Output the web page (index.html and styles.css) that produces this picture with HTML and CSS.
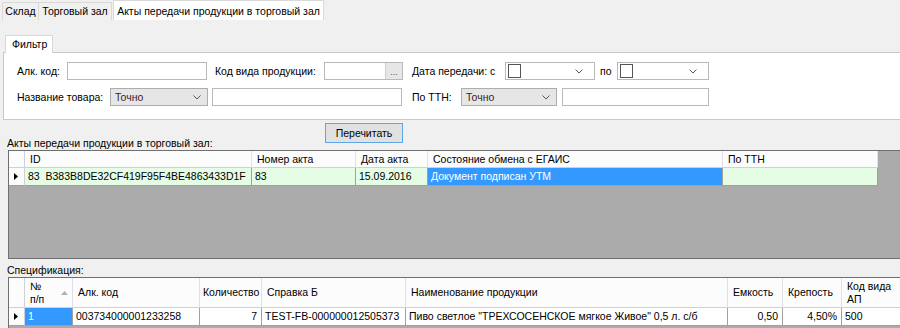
FILE: index.html
```html
<!DOCTYPE html>
<html lang="ru">
<head>
  <meta charset="UTF-8">
  <title>Акты передачи продукции в торговый зал</title>
  <link rel="stylesheet" href="styles.css">
</head>
<body>

  <div class="tabs">
    <div class="tab t1">Склад</div>
    <div class="tab t2">Торговый зал</div>
    <div class="tab t3 active">Акты передачи продукции в торговый зал</div>
  </div>

  <div class="page">
    <div class="group-tab">Фильтр</div>
    <div class="filter">
      <div class="row">
        <span class="lbl w-alk">Алк. код:</span>
        <span class="edit w-alk-edit"></span>
        <span class="lbl w-kod">Код вида продукции:</span>
        <span class="edit w-kod-edit"><span class="dots">...</span></span>
        <span class="lbl w-date">Дата передачи: с</span>
        <span class="edit date w-date1">
          <span class="check"></span>
          <svg class="chev" width="8" height="5" viewBox="0 0 8 5"><polyline points="0.5,0.5 4,4 7.5,0.5" fill="none" stroke="#555" stroke-width="1"/></svg>
        </span>
        <span class="lbl w-po">по</span>
        <span class="edit date w-date2">
          <span class="check"></span>
          <svg class="chev" width="8" height="5" viewBox="0 0 8 5"><polyline points="0.5,0.5 4,4 7.5,0.5" fill="none" stroke="#555" stroke-width="1"/></svg>
        </span>
      </div>
      <div class="row">
        <span class="lbl w-name">Название товара:</span>
        <span class="combo w-combo1">Точно
          <svg class="chev" width="8" height="5" viewBox="0 0 8 5"><polyline points="0.5,0.5 4,4 7.5,0.5" fill="none" stroke="#555" stroke-width="1"/></svg>
        </span>
        <span class="edit w-name-edit"></span>
        <span class="lbl w-ttn">По ТТН:</span>
        <span class="combo w-combo2">Точно
          <svg class="chev" width="8" height="5" viewBox="0 0 8 5"><polyline points="0.5,0.5 4,4 7.5,0.5" fill="none" stroke="#555" stroke-width="1"/></svg>
        </span>
        <span class="edit w-ttn-edit"></span>
      </div>
    </div>

    <div class="toolbar">
      <span class="caption">Акты передачи продукции в торговый зал:</span>
      <button class="btn">Перечитать</button>
    </div>

    <div class="grid grid-acts">
      <div class="grow head">
        <span class="cell rh"></span>
        <span class="cell c-id">ID</span>
        <span class="cell c-num">Номер акта</span>
        <span class="cell c-date">Дата акта</span>
        <span class="cell c-state">Состояние обмена с ЕГАИС</span>
        <span class="cell c-ttn">По ТТН</span>
      </div>
      <div class="grow data green">
        <span class="cell rh"><svg width="4" height="7" viewBox="0 0 4 7"><polygon points="0,0 4,3.5 0,7" fill="#000"/></svg></span>
        <span class="cell c-id">83&nbsp; B383B8DE32CF419F95F4BE4863433D1F</span>
        <span class="cell c-num">83</span>
        <span class="cell c-date">15.09.2016</span>
        <span class="cell c-state selected">Документ подписан УТМ</span>
        <span class="cell c-ttn"></span>
      </div>
    </div>

    <div class="caption spec">Спецификация:</div>

    <div class="grid grid-spec">
      <div class="grow head tall">
        <span class="cell rh"></span>
        <span class="cell s-no two">№<br>п/п<svg class="sort" width="7" height="4" viewBox="0 0 7 4"><polygon points="0,4 3.5,0 7,4" fill="#b0b0b0"/></svg></span>
        <span class="cell s-alk">Алк. код</span>
        <span class="cell s-qty">Количество</span>
        <span class="cell s-ref">Справка Б</span>
        <span class="cell s-name">Наименование продукции</span>
        <span class="cell s-vol">Емкость</span>
        <span class="cell s-alc">Крепость</span>
        <span class="cell s-code two">Код вида<br>АП</span>
      </div>
      <div class="grow data">
        <span class="cell rh"><svg width="4" height="7" viewBox="0 0 4 7"><polygon points="0,0 4,3.5 0,7" fill="#000"/></svg></span>
        <span class="cell s-no selected">1</span>
        <span class="cell s-alk">003734000001233258</span>
        <span class="cell s-qty num">7</span>
        <span class="cell s-ref">TEST-FB-000000012505373</span>
        <span class="cell s-name">Пиво светлое "ТРЕХСОСЕНСКОЕ мягкое Живое" 0,5 л. с/б</span>
        <span class="cell s-vol num">0,50</span>
        <span class="cell s-alc num">4,50%</span>
        <span class="cell s-code">500</span>
      </div>
    </div>
  </div>

</body>
</html>
```

FILE: styles.css
```css
body {
  margin: 0;
  width: 900px;
  height: 328px;
  overflow: hidden;
  background-color: #f0f0f0;
  font-family: "Liberation Sans", Arial, sans-serif;
  font-size: 10.5px;
  color: #000;
}

/* верхние вкладки */
.tabs {
  display: flex;
  align-items: flex-end;
  height: 20px;
  padding-left: 2px;
}
.tab {
  box-sizing: border-box;
  height: 18px;
  line-height: 16px;
  text-align: center;
  border: 1px solid #d9d9d9;
  border-bottom: none;
  background-color: #f0f0f0;
  white-space: nowrap;
}
.t1 { width: 37px; }
.t2 { width: 73px; border-left: none; }
.t3 { width: 211px; margin-left: 1px; }
.tab.active {
  height: 20px;
  line-height: 20px;
  background-color: #fff;
}

.page {
  padding: 15px 0 0 3px;
}

/* фильтр */
.group-tab {
  position: relative;
  box-sizing: border-box;
  width: 48px;
  height: 18px;
  margin-left: 2px;
  margin-bottom: -1px;
  padding-left: 6px;
  line-height: 17px;
  background-color: #fff;
  border: 1px solid #d9d9d9;
  border-bottom: none;
}
.filter {
  box-sizing: border-box;
  width: 910px;
  height: 68px;
  background-color: #fff;
  border: 1px solid #c9c9c9;
  padding: 9px 0 0 13px;
}
.row {
  display: flex;
  height: 18px;
}
.row + .row {
  margin-top: 8px;
}
.lbl {
  line-height: 18px;
  white-space: nowrap;
}
.edit, .combo {
  position: relative;
  box-sizing: border-box;
  height: 18px;
  border: 1px solid #b9b9b9;
  background-color: #fff;
}
.combo {
  background-color: #e6e6e6;
  border-color: #adadad;
  padding-left: 4px;
  line-height: 16px;
  color: #3c1e28;
}
.chev {
  position: absolute;
  right: 6px;
  top: 6px;
}
.date .chev {
  right: 11px;
}
.check {
  position: absolute;
  left: 2px;
  top: 1px;
  box-sizing: border-box;
  width: 13px;
  height: 14px;
  border: 1px solid #555;
  background-color: #fff;
}
.dots {
  position: absolute;
  right: 0;
  top: 0;
  bottom: 0;
  width: 16px;
  background-color: #e6e6e6;
  border-left: 1px solid #d0d0d0;
  text-align: center;
  line-height: 18px;
  color: #555;
  font-size: 9px;
}

.w-alk { width: 50px; }
.w-alk-edit { width: 140px; }
.w-kod { width: 109px; margin-left: 8px; }
.w-kod-edit { width: 79px; }
.w-date { width: 93px; margin-left: 9px; }
.w-date1 { width: 90px; }
.w-po { width: 17px; margin-left: 5px; }
.w-date2 { width: 92px; }
.w-name { width: 93px; }
.w-combo1 { width: 98px; }
.w-name-edit { width: 190px; margin-left: 4px; }
.w-ttn { width: 49px; margin-left: 10px; }
.w-combo2 { width: 96px; }
.w-ttn-edit { width: 147px; margin-left: 5px; }

/* кнопка и подписи */
.toolbar {
  display: flex;
  height: 30px;
}
.caption {
  width: 318px;
  margin-left: 4px;
  align-self: flex-end;
  line-height: 13px;
  white-space: nowrap;
}
.btn {
  box-sizing: border-box;
  width: 78px;
  height: 20px;
  margin-top: 3px;
  padding: 0;
  font-family: inherit;
  font-size: 10.5px;
  background-color: #e1e1e1;
  border: 1px solid #5ea5ea;
}
.spec {
  height: 18px;
  padding-top: 5px;
  box-sizing: border-box;
}

/* таблицы */
.grid {
  box-sizing: border-box;
  width: 905px;
  margin-left: 5px;
  background-color: #ababab;
  border: 1px solid #6f6f6f;
}
.grid-acts {
  height: 109px;
}
.grid-spec {
  height: 60px;
}
.grow {
  display: flex;
}
.cell {
  position: relative;
  box-sizing: border-box;
  flex: none;
  white-space: nowrap;
  overflow: hidden;
  border-right: 1px solid #a0a0a0;
  border-bottom: 1px solid #a0a0a0;
}
.head .cell {
  height: 17px;
  line-height: 16px;
  padding-left: 5px;
  background-color: #fcfcfd;
  border-right-color: #e0e0e6;
  border-bottom-color: #d0d0d8;
}
.head.tall .cell {
  height: 30px;
  line-height: 29px;
}
.head.tall .cell.two {
  line-height: 13px;
  padding-top: 2px;
}
.head .s-qty {
  padding-left: 3px;
}
.data .cell {
  height: 18px;
  line-height: 17px;
  padding-left: 3px;
  background-color: #fff;
}
.green .cell {
  background-color: #e5fde5;
}
.grow .rh {
  width: 16px;
  padding-left: 0;
  background-color: #fcfcfd;
  border-right-color: #d0d0d8;
}
.data .rh svg {
  position: absolute;
  left: 5px;
  top: 5px;
}
.data .cell.selected {
  background-color: #3399ff;
  color: #fff;
}
.data .num {
  text-align: right;
  padding-right: 4px;
}
.sort {
  position: absolute;
  right: 4px;
  top: 13px;
}

.c-id { width: 227px; }
.c-num { width: 104px; }
.c-date { width: 72px; }
.c-state { width: 295px; }
.c-ttn { width: 155px; }

.s-no { width: 48px; }
.s-alk { width: 127px; }
.s-qty { width: 62px; }
.s-ref { width: 144px; }
.s-name { width: 322px; }
.s-vol { width: 55px; }
.s-alc { width: 59px; }
.s-code { width: 70px; }
```
